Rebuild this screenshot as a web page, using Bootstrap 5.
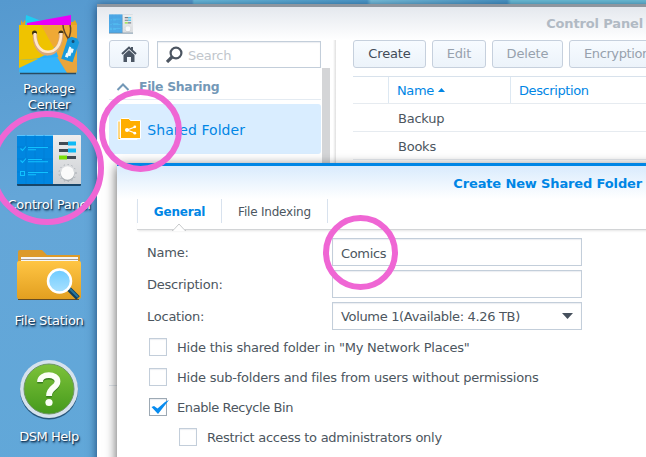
<!DOCTYPE html>
<html lang="en">
<head>
<meta charset="utf-8">
<title>Control Panel</title>
<link href="https://cdn.jsdelivr.net/npm/bootstrap@5.3.0/dist/css/bootstrap.min.css" rel="stylesheet">
<style>
body{width:646px;height:457px;font:13px/16px "DejaVu Sans",Verdana,sans-serif;letter-spacing:-.24px;color:#4c5660;background:#63a8da}
.desktop{width:646px;height:457px;background:linear-gradient(90deg,#5799cb 0,#5799cb 95px,#6dbddd 97px,#4f9bcc 270px,#7cc3de 274px,#4b96c6 410px,#6fc1da 414px,#6fc1da) 97px 0/549px 8px no-repeat,linear-gradient(170deg,#5599cf 0,#64a6d8 35%,#60a8d9 100%)}
.launchers{width:97px;height:457px}
.launcher{position:relative;width:98px;text-align:center;color:#fff;text-shadow:1px 1px 1px #163a5c,1px 2px 2px rgba(10,40,70,.7)}
.launcher svg{display:block;margin:0 auto;overflow:visible}
.l-package{margin-top:14px;height:119px}.l-control{height:115px}.l-file{height:111px}
.win{position:absolute;background:#fff;overflow:hidden}
.win-main{left:97px;top:4px;width:560px;height:470px;border-top:3px solid #8e969f;box-shadow:0 2px 9px rgba(10,50,95,.85)}
.win-head{height:33px;background:linear-gradient(#e4e8ee,#fff)}
.win-title{color:#b1bac4;font-weight:700;padding-right:14px;letter-spacing:-.15px}
.side{width:225px;padding-left:12px;flex-shrink:0}
.tool{height:28px;border:1px solid #c6d0dd;border-radius:3px;background:linear-gradient(#f7fbff,#ecf3fa);color:#414b58;font-size:13px;line-height:16px;padding:0;letter-spacing:-.15px}
.tool.off{color:#97a1ad}
.box{border:1px solid #c3ceda;box-shadow:inset 0 1px 1px rgba(80,110,140,.12);background:#fff}
.search{width:164px;height:27px;margin-top:1px;color:#c1c6cc}
.group-title{height:32px;color:#7398b7;font-weight:700;font-size:12.4px;letter-spacing:-.3px;border-bottom:1px solid #e4ebf2;width:212px;padding-top:6px}
.picked{width:212px;height:50px;margin-top:4px;border-radius:3px;background:#d9edff;color:#0086e5;font-size:14px;letter-spacing:.05px}
.scroller{width:8px;flex-shrink:0;background:#d4d5d7;margin-top:28px}
.divide{width:7px;flex-shrink:0;margin-left:3px;background:linear-gradient(90deg,#fff 0,#e3e3e3 38%,#fff 50%)}
.main-area{margin-left:13px;width:310px;flex-shrink:0}
.grid-area{margin-top:8px;border-top:1px solid #d8e2ec;width:310px}
.grid-line{height:28px;border-bottom:1px solid #e6ebf0}
.grid-line.hd{height:27px;color:#0086e5;letter-spacing:-.4px}
.c0{width:35px}.c1{width:122px}.hd .c1,.hd .c2{border-left:1px solid #dde8f2}
.c1,.c2{padding-left:8px}
.hd span{padding-top:2px}
.win-dialog{left:117px;top:163px;width:560px;height:320px;border-top:3px solid #0086e5;box-shadow:0 3px 11px rgba(0,0,0,.65)}
.dlg-head{height:33px;padding-top:2px;background:linear-gradient(#d9ebfd,#fff);color:#0086e5;font-weight:700;padding-right:35px;letter-spacing:-.14px}
.tabs{margin-left:20px;height:31px;border-bottom:1px solid #d2d4d6;box-shadow:0 2px 2px -1px #e5e5e5;position:relative}
.tab{height:24px;padding-top:2px;border-left:1px solid #d8e2ee;font-size:12px;letter-spacing:-.2px}
.tab.on{color:#0086e5;font-weight:700}
.notch{position:absolute;left:35px;top:24px}
.form-area{margin:8px 0 0 30px}
.line{height:32px}.line .lab{width:185px;padding-top:7px}
.entry{width:250px;height:28px;padding-left:8px;letter-spacing:-.33px}
.choice{height:30px;padding-left:2px;letter-spacing:-.22px}
.choice .t{padding-top:2px}
.check{width:18px;height:18px;margin-right:10px}
.sub{padding-left:32px}
.rings{position:absolute;left:0;top:0;pointer-events:none}
.t{white-space:nowrap}
</style>
<script src="https://cdn.jsdelivr.net/npm/bootstrap@5.3.0/dist/js/bootstrap.bundle.min.js"></script>
</head>
<body class="m-0 overflow-hidden">
<svg width="0" height="0" class="position-absolute">
<defs>
<linearGradient id="gold" x1="0" y1="0" x2="0" y2="1"><stop stop-color="#ffc544"/><stop offset="1" stop-color="#e29f20"/></linearGradient>
<linearGradient id="green" x1="0" y1="0" x2="0" y2="1"><stop stop-color="#7dc23a"/><stop offset="1" stop-color="#459a1c"/></linearGradient>
<linearGradient id="silver" x1="0" y1="0" x2="0" y2="1"><stop stop-color="#eeeeee"/><stop offset="1" stop-color="#cdd0d4"/></linearGradient>
<linearGradient id="lens" x1="0" y1="0" x2="0" y2="1"><stop stop-color="#6ecbff"/><stop offset="1" stop-color="#a9e1ff"/></linearGradient>
<symbol id="panel" viewBox="0 0 64 51">
<rect y="1" width="64" height="50" rx="1" fill="#174568"/><path d="M0 1Q0 0 1 0H36V49H0Z" fill="#0086e0"/><path d="M0 .5H36" stroke="#58c5ff"/><path d="M36 0H63Q64 0 64 1V49H36Z" fill="url(#silver)"/>
<path d="M9 0V49M18 0V49M27 0V49M0 12H36M0 24H36M0 37H36" stroke="#007bd2" stroke-width=".6"/>
<path d="M3.500 13.500L5.500 15.500L9 11.500M3.500 25.500L5.500 27.500L9 23.500M3.500 36.500H7.500V40.500H3.500ZM11 12.500H31M11 14.700H19M11 24.500H25M11 26.700H31M11 37.500H31M11 39.700H19" fill="none" stroke="#10c2ff" stroke-width="1.100"/>
<path d="M42 7H52V10H42ZM42 14H52V17H42ZM50 21H59V24H50Z" fill="#414b54"/><path d="M51 6.500H59V10.500H51ZM51 13.500H59V17.500H51Z" fill="#0fbaf5"/><path d="M42 20.500H50V24.500H42Z" fill="#7ade07"/>
<circle cx="50.500" cy="38" r="8.500" fill="none" stroke="#9da3a9" stroke-width="1" stroke-dasharray="1 3"/><circle cx="50.500" cy="39" r="7" fill="#a7adb2"/><circle cx="50.500" cy="38" r="6.700" fill="#fafafa"/>
</symbol>
</defs></svg>
<div class="desktop position-relative overflow-hidden">
<div class="launchers d-flex flex-column">
<div class="launcher l-package">
<svg width="64" height="62" viewBox="0 0 64 62"><path d="M4 11V6L6 9L8 6L10 9L56 8L58 6L60 10V14H4Z" fill="#e5a51f"/><path d="M9 1L22 6L51 13H8Z" fill="#20ccf2"/><path d="M10 9L54 1V11H10Z" fill="#e800f8"/><path d="M2 11H60V57Q60 59 58 59H4Q2 59 2 57Z" fill="#f2c700"/><path d="M24 11H60V54L40 44Z" fill="#efa935"/><path d="M2 54L38 33L42 45L60 56V57Q60 59 58 59H4Q2 59 2 57Z" fill="#29b0fb"/><path d="M24 11H2V54L38 36Z" fill="#efc300"/><path d="M2 46L40 43L50 59H4Q2 59 2 57Z" fill="#35b5fb"/><path d="M2 46V54L21 45Z" fill="#efc300"/><path d="M40 43L60 47V57Q60 59 58 59H50Z" fill="#e9a53c"/><path d="M3 59.500H59" stroke="#294b61" stroke-width="1.500"/><circle cx="17.500" cy="19" r="2.500" fill="#403311"/><circle cx="44" cy="19" r="2.500" fill="#403311"/><path d="M18 20C17 46 45 46 44 19" fill="none" stroke="#d8a77b" stroke-width="4.500"/><path d="M18 19C17 44 45 44 44 19" fill="none" stroke="#ffe7ca" stroke-width="2.700"/><path d="M52 26Q46 17 46 11M51 26Q55 17 53 11" fill="none" stroke="#60462a" stroke-width="1.500"/><g transform="rotate(18 53 37)"><path d="M47 26L50 23H56L59 26V47H47Z" fill="#199add"/><circle cx="53" cy="27" r="1.500" fill="#174f77"/><path d="M51 33H53V34H56V38H55V42H53V44H50V40H51Z" fill="#eefaff"/></g></svg>
<div class="t" style="margin-top:5px">Package<br>Center</div></div>
<div class="launcher l-control"><svg width="64" height="53" style="margin-top:1px"><use href="#panel" width="64" height="53"/></svg><div class="t" style="margin-top:10px">Control Panel</div></div>
<div class="launcher l-file"><svg width="64" height="56" viewBox="0 0 64 56"><path d="M1 15V4Q1 2 3 2H25L30 7H63V17H1Z" fill="#dc9a2a"/><path d="M4 9H61V18H4Z" fill="#f6f6f6"/><path d="M4 11.500H61" stroke="#a99b8f"/><path d="M0 15Q0 13 2 13H62Q64 13 64 15V49Q64 51 62 51H2Q0 51 0 49Z" fill="url(#gold)"/><path d="M1 51.500H62" stroke="#654c23"/><path d="M52 41L61 50" stroke="#123f5d" stroke-width="5"/><path d="M52 40L61 49" stroke="#27779e" stroke-width="2"/><circle cx="42.500" cy="33" r="11.500" fill="url(#lens)" stroke="#fff" stroke-width="2.500"/></svg><div class="t" style="margin-top:9px">File Station</div></div>
<div class="launcher"><svg width="60" height="64" viewBox="0 0 60 64"><circle cx="30" cy="31.500" r="29" fill="#28587d"/><circle cx="30" cy="30" r="29" fill="#d6e2ed"/><circle cx="30" cy="30" r="25" fill="url(#green)" stroke="#6d9562"/><path d="M21 23C21 14 38.500 14 38.500 22.500C38.500 29 30 28 30 37" fill="none" stroke="#387d1d" stroke-width="5.500" transform="translate(0 1.500)"/><path d="M21 23C21 14 38.500 14 38.500 22.500C38.500 29 30 28 30 37" fill="none" stroke="#fbfff6" stroke-width="5.800"/><circle cx="30" cy="43.500" r="3.600" fill="#fbfff6"/></svg><div class="t" style="margin-top:6px;letter-spacing:-.45px">DSM Help</div></div>
</div>

<section class="win win-main">
<header class="win-head d-flex align-items-center justify-content-between"><svg width="24" height="22" style="margin-left:12px;opacity:.68"><use href="#panel" width="24" height="22"/></svg><div class="win-title t"><span>Control Panel</span></div></header>
<div class="d-flex h-100">
<aside class="side">
<div class="d-flex gap-2"><button class="tool d-flex align-items-center justify-content-center" style="width:40px" aria-label="Home"><svg width="16" height="16" viewBox="0 0 16 16"><path d="M1 8L8 1.500L15 8M11 1V4" fill="none" stroke="#4b5664" stroke-width="2"/><path d="M2.500 9L8 4L13.500 9V16H10V11H6V16H2.500Z" fill="#4b5664"/></svg></button>
<div class="box search d-flex align-items-center"><svg width="17" height="17" viewBox="0 0 17 17" style="margin-left:8px"><circle cx="10" cy="7" r="5.400" fill="none" stroke="#4c5561" stroke-width="2.200"/><path d="M6 11L1 16" stroke="#4c5561" stroke-width="3.200"/></svg><span style="margin:2px 0 0 5px">Search</span></div></div>
<div class="group-title d-flex align-items-center"><svg width="14" height="9" viewBox="0 0 14 9" style="margin:0 9px 0 7px"><path d="M1.500 8L7 2.500L12.500 8" fill="none" stroke="#7398b7" stroke-width="2"/></svg><span>File Sharing</span></div>
<div class="picked d-flex align-items-center"><svg width="24" height="22" viewBox="0 0 24 22" style="margin-left:8px"><path d="M1 3H3V20H20V21.500H1Z" fill="#ffae00" stroke="#fff"/><path d="M3.500 1.500Q3.500.5 4.500.5H12L13.500 2.500H23.500V20.500H3.500Z" fill="#ffae00" stroke="#fff"/><path d="M18 9L10 12L18 15" fill="none" stroke="#fff" stroke-width="1.200"/><circle cx="17.800" cy="8.800" r="1.400" fill="#fff"/><circle cx="10" cy="12" r="2" fill="#fff"/><circle cx="17.800" cy="15.200" r="1.400" fill="#fff"/></svg><span class="ms-auto t" style="padding:1px 76px 0 0">Shared Folder</span></div>
<div style="width:212px;height:232px;border-bottom:1px solid #e2e8ee"></div>
</aside>
<div class="scroller"></div><div class="divide"></div>
<div class="main-area"><div class="d-flex" style="gap:6px"><button class="tool flex-shrink-0" style="width:73px">Create</button><button class="tool off flex-shrink-0" style="width:54px">Edit</button><button class="tool off flex-shrink-0" style="width:71px">Delete</button><button class="tool off flex-shrink-0 text-start" style="width:110px;padding-left:14px;letter-spacing:-.4px">Encryption</button></div>
<div class="grid-area">
<div class="grid-line hd d-flex"><div class="c0"></div><div class="c1 d-flex align-items-center"><span>Name</span><svg width="7" height="4" class="ms-1"><path d="M0 4L3.500 0L7 4Z" fill="#0086e5"/></svg></div><div class="c2 d-flex align-items-center"><span>Description</span></div></div>
<div class="grid-line d-flex align-items-center"><div class="c0"></div><div class="c1 ps-2"><div style="margin:2px 0 0 2px">Backup</div></div></div>
<div class="grid-line d-flex align-items-center"><div class="c0"></div><div class="c1 ps-2"><div style="margin:2px 0 0 2px">Books</div></div></div>
</div></div>
</div>
</section>

<section class="win win-dialog">
<header class="dlg-head d-flex align-items-center justify-content-end"><span>Create New Shared Folder</span></header>
<nav class="tabs d-flex"><div class="tab on d-flex align-items-center justify-content-center" style="width:84px">General</div><div class="tab d-flex align-items-center justify-content-center" style="width:106px">File Indexing</div><div class="tab"></div>
<svg class="notch" width="14" height="8"><path d="M0 7.500H1L7 1L13 7.500H14" fill="#fff" stroke="#c8cacc"/><path d="M2 7.500H12" stroke="#fff" stroke-width="1.500"/></svg></nav>
<div class="form-area">
<div class="line d-flex"><div class="lab">Name:</div><div class="box entry d-flex align-items-center pt-1">Comics</div></div>
<div class="line d-flex"><div class="lab">Description:</div><div class="box entry"></div></div>
<div class="line d-flex"><div class="lab">Location:</div><div class="box entry d-flex align-items-center justify-content-between"><span style="padding-top:2px">Volume 1(Available: 4.26 TB)</span><svg width="11" height="6" style="margin-right:8px"><path d="M0 0H11L5.500 6Z" fill="#46505d"/></svg></div></div>
<div style="height:4px"></div>
<div class="choice d-flex"><span class="box check"></span><span class="t">Hide this shared folder in "My Network Places"</span></div>
<div class="choice d-flex"><span class="box check"></span><span class="t">Hide sub-folders and files from users without permissions</span></div>
<div class="choice d-flex"><span class="box check" style="border-color:#9da9b4"><svg width="19" height="16" viewBox="0 0 19 16" class="d-block overflow-visible"><path d="M1.500 8L4 7L7.500 9.500L15 3L19 1L8 15Z" fill="#078cf0"/></svg></span><span class="t" style="letter-spacing:-.4px">Enable Recycle Bin</span></div>
<div class="choice sub d-flex"><span class="box check"></span><span class="t" style="letter-spacing:-.27px">Restrict access to administrators only</span></div>
</div>
</section>
<svg class="rings" width="646" height="457" fill="none" stroke="#ef66d4" stroke-width="6"><circle cx="47" cy="168" r="54"/><circle cx="140.500" cy="130.500" r="38.500"/><circle cx="360.500" cy="252.500" r="34.500"/></svg>
</div>
</body>
</html>
